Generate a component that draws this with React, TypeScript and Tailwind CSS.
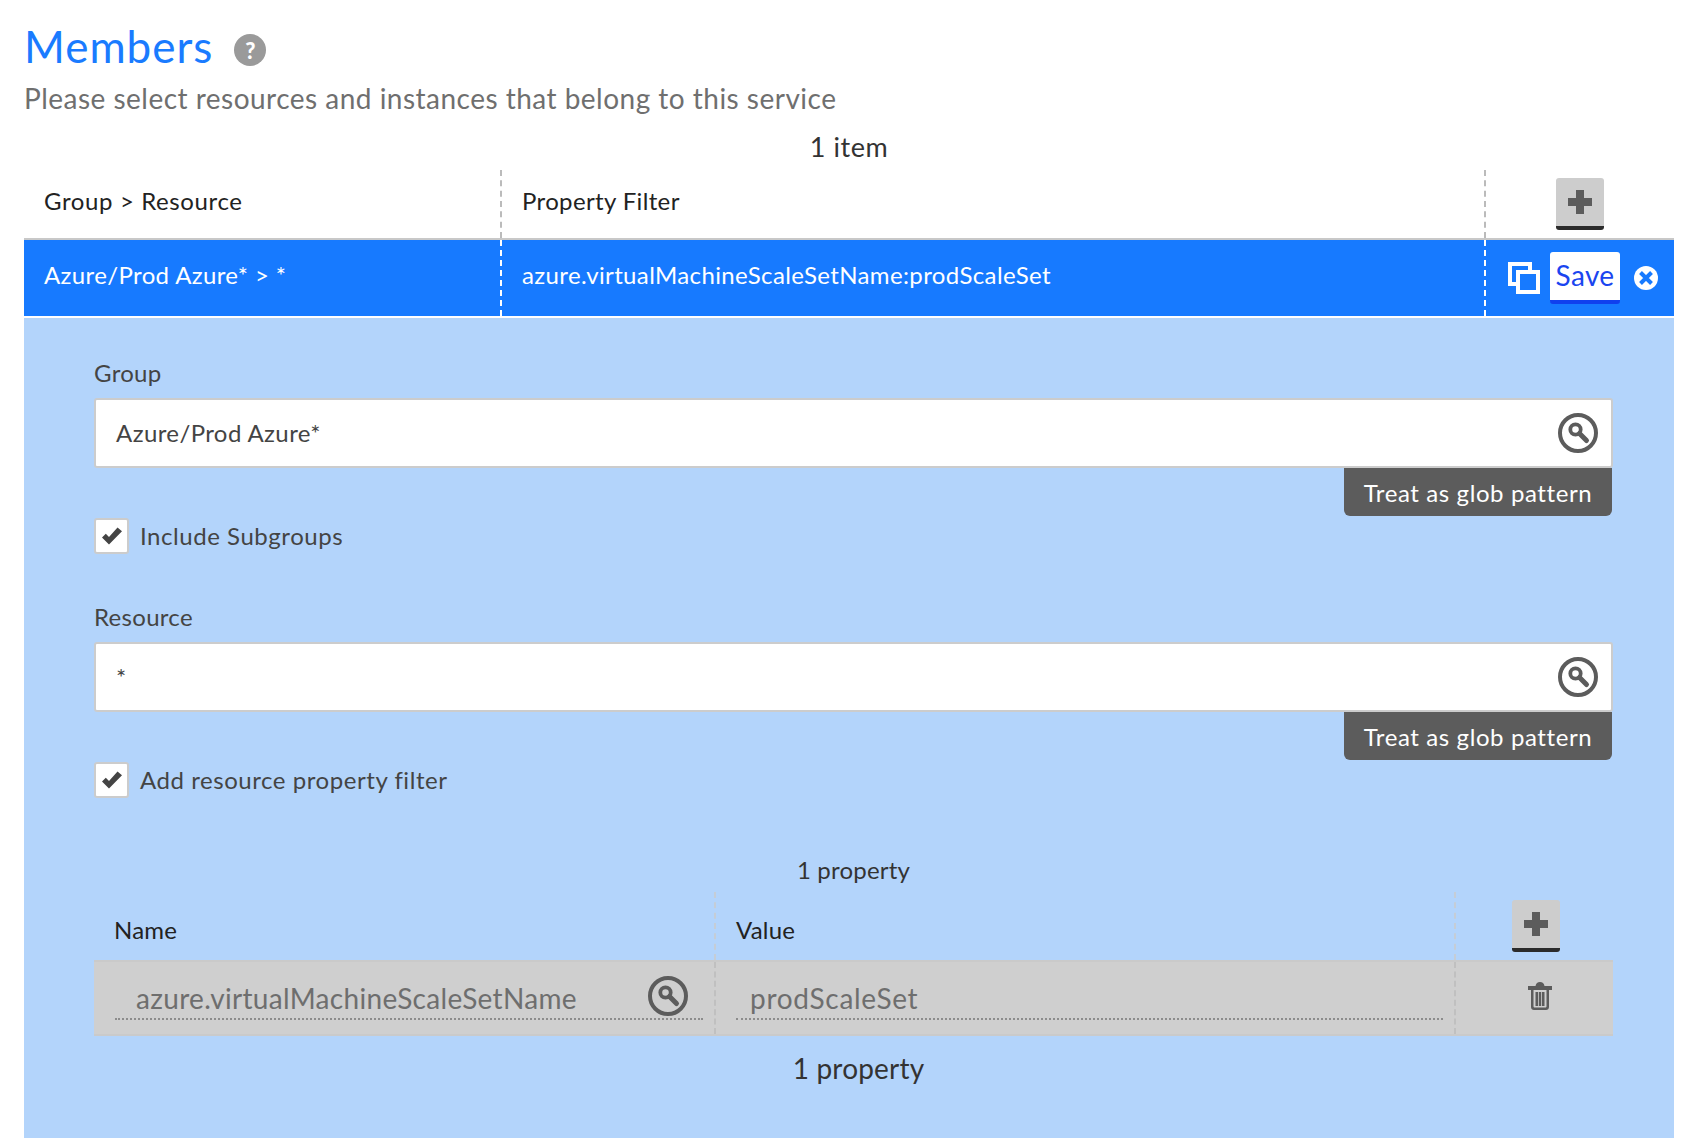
const font = { fontFamily: '"Lato", "Open Sans", sans-serif' };

function SearchIcon({ size = 40 }: { size?: number }) {
  return (
    <svg width={size} height={size} viewBox="0 0 40 40" fill="none" className="shrink-0">
      <circle cx="20" cy="20" r="18" stroke="#5c5c5c" strokeWidth="4" />
      <circle cx="17.5" cy="16.5" r="5.2" stroke="#5c5c5c" strokeWidth="3.8" />
      <path d="M21.5 20.5 L28.500 27.500" stroke="#5c5c5c" strokeWidth="5" strokeLinecap="round" />
    </svg>
  );
}

function PlusButton() {
  return (
    <div className="w-[48px] h-[52px] rounded-[3px] bg-[#cdcdcd] border-b-4 border-[#2b2b2b] flex items-center justify-center">
      <svg width="24" height="24" viewBox="0 0 24 24" fill="#5c5c5c">
        <path d="M8 0h8v8h8v8h-8v8H8v-8H0V8h8z" />
      </svg>
    </div>
  );
}

function Check() {
  return (
    <div className="w-[35px] h-[36px] bg-white border-2 border-[#cccccc] rounded-[3px] flex items-center justify-center">
      <svg width="20" height="18" viewBox="0 0 20 18" fill="#444444">
        <path d="M7 17.500 0 10.500 3.800 6.700 7 9.900 15.500 0.500 20 4.200z" />
      </svg>
    </div>
  );
}

function Field({ label, value, check }: { label: string; value: string; check: string }) {
  return (
    <div className="flex flex-col">
      <div className="h-[32px] mb-[8px] pb-[2px] flex items-center text-[24px] tracking-[0.3px] text-[#444444]">{label}</div>
      <div className="h-[70px] bg-white border-2 border-[#cccccc] rounded-[3px] flex items-center justify-between pl-[20px] pr-[13px] text-[24px] tracking-[0.4px] text-[#444444]">
        <span>{value}</span>
        <SearchIcon />
      </div>
      <div className="flex justify-end">
        <div className="w-[268px] h-[48px] mr-[1px] pt-[2px] bg-[#5c5c5c] rounded-b-[6px] flex items-center justify-center text-white text-[24px] tracking-[0.6px]">
          Treat as glob pattern
        </div>
      </div>
      <div className="flex items-center gap-[11px] mt-[2px] h-[36px] text-[24px] tracking-[0.55px] text-[#444444]">
        <Check />
        <span>{check}</span>
      </div>
    </div>
  );
}

export default function App() {
  return (
    <div style={font} className="w-[1706px] h-[1138px] overflow-hidden bg-white pl-[24px] pr-[32px] text-[#222222]">
      <div className="h-[73px] pt-[19px] flex items-center gap-[21px]">
        <h1 className="text-[44px] leading-[56px] tracking-[1px] text-[#1a7bff] font-normal">Members</h1>
        <div className="w-[32px] h-[32px] mt-[8px] rounded-full bg-[#9a9a9a] text-white font-black text-[22px] flex items-center justify-center">?</div>
      </div>
      <div className="h-[40px] mt-[5px] flex items-center text-[28px] tracking-[0.48px] text-[#6f6f6f]">
        Please select resources and instances that belong to this service
      </div>
      <div className="h-[45px] mt-[7px] pb-[1px] flex items-center justify-center text-[27px] tracking-[0.55px] text-[#333333]">1 item</div>

      <div className="flex h-[70px] border-b-2 border-[#c8c8c8]">
        <div className="w-[476px] pl-[20px] pb-[7px] flex items-center text-[24px] tracking-[0.62px]">Group &gt; Resource</div>
        <div className="w-[984px] pl-[20px] pb-[7px] flex items-center text-[24px] tracking-[0.36px] border-l-2 border-dashed border-[#bbbbbb]">Property Filter</div>
        <div className="flex-1 pl-[70px] pt-[8px] border-l-2 border-dashed border-[#bbbbbb]">
          <PlusButton />
        </div>
      </div>

      <div className="flex h-[76px] bg-[#177aff] text-white text-[24px] tracking-[0.37px]">
        <div className="w-[476px] pl-[20px] pb-[6px] flex items-center">Azure/Prod Azure* &gt; *</div>
        <div className="w-[984px] pl-[20px] pb-[6px] flex items-center border-l-2 border-dashed border-white">azure.virtualMachineScaleSetName:prodScaleSet</div>
        <div className="flex-1 flex items-center pl-[22px] border-l-2 border-dashed border-white">
          <svg width="32" height="32" viewBox="0 0 32 32" fill="none" stroke="white" strokeWidth="4">
            <path d="M9 22H2V2h20v7" />
            <rect x="10" y="10" width="20" height="20" />
          </svg>
          <div className="w-[70px] h-[52px] ml-[10px] pb-[3px] bg-white border-b-4 border-[#1040ee] rounded-[3px] text-[#1a45f0] text-[28px] flex items-center justify-center">Save</div>
          <svg width="24" height="24" viewBox="0 0 24 24" className="ml-[14px]">
            <circle cx="12" cy="12" r="12" fill="white" />
            <path d="M6.500 6.500 17.500 17.500M17.500 6.500 6.500 17.500" stroke="#177aff" strokeWidth="4" />
          </svg>
        </div>
      </div>

      <div className="mt-[2px] h-[820px] bg-[#b3d4fb] pt-[40px] pl-[70px] pr-[61px]">
        <Field label="Group" value="Azure/Prod Azure*" check="Include Subgroups" />
        <div className="mt-[48px]">
          <Field label="Resource" value="*" check="Add resource property filter" />
        </div>

        <div className="mt-[56px] h-[32px] flex items-center justify-center text-[24px] tracking-[0.2px] text-[#333333]">1 property</div>

        <div className="mt-[6px] flex h-[68px] text-[24px] tracking-[0.2px]">
          <div className="w-[620px] pl-[20px] pt-[20px]">Name</div>
          <div className="w-[740px] pl-[20px] pt-[20px] border-l-2 border-dashed border-[#c5cdd6]">Value</div>
          <div className="flex-1 pl-[56px] pt-[8px] border-l-2 border-dashed border-[#c5cdd6]">
            <PlusButton />
          </div>
        </div>

        <div className="flex h-[76px] bg-[#cfcfcf] border-y-2 border-[#cacaca] text-[28px] tracking-[0.32px] text-[#6e6e6e]">
          <div className="w-[620px] pl-[21px] pr-[11px] pt-[12px] pb-[14px]">
            <div className="h-[46px] border-b-2 border-dotted border-[#8c8c8c] flex items-start justify-between pl-[21px] pr-[15px]">
              <span className="pt-[3px]">azure.virtualMachineScaleSetName</span>
              <div className="mt-[2px]"><SearchIcon /></div>
            </div>
          </div>
          <div className="w-[740px] pl-[20px] pr-[11px] pt-[12px] pb-[14px] border-l-2 border-dashed border-[#c0c0c0]">
            <div className="h-[46px] border-b-2 border-dotted border-[#8c8c8c] pl-[14px] pt-[3px] tracking-[0.7px]">prodScaleSet</div>
          </div>
          <div className="flex-1 pl-[72px] pt-[20px] border-l-2 border-dashed border-[#c0c0c0]">
            <svg width="24" height="28" viewBox="0 0 24 28" fill="#5c5c5c">
              <path d="M0 4h7.500C8 1.500 9.500 0 12 0s4 1.500 4.500 4H24v4H0z" />
              <path d="M3 8h2.500v16.500c0 .8.700 1 1 1h11c.3 0 1-.2 1-1V8H21v17c0 1.700-1.300 3-3 3H6c-1.700 0-3-1.300-3-3z" />
              <rect x="7.500" y="10" width="2.500" height="14" />
              <rect x="14" y="10" width="2.500" height="14" />
              <rect x="10.800" y="10" width="2.400" height="14" />
            </svg>
          </div>
        </div>

        <div className="mt-[14px] h-[36px] flex items-center justify-center pl-[10px] text-[28px] tracking-[0.2px] text-[#333333]">1 property</div>
      </div>
    </div>
  );
}
